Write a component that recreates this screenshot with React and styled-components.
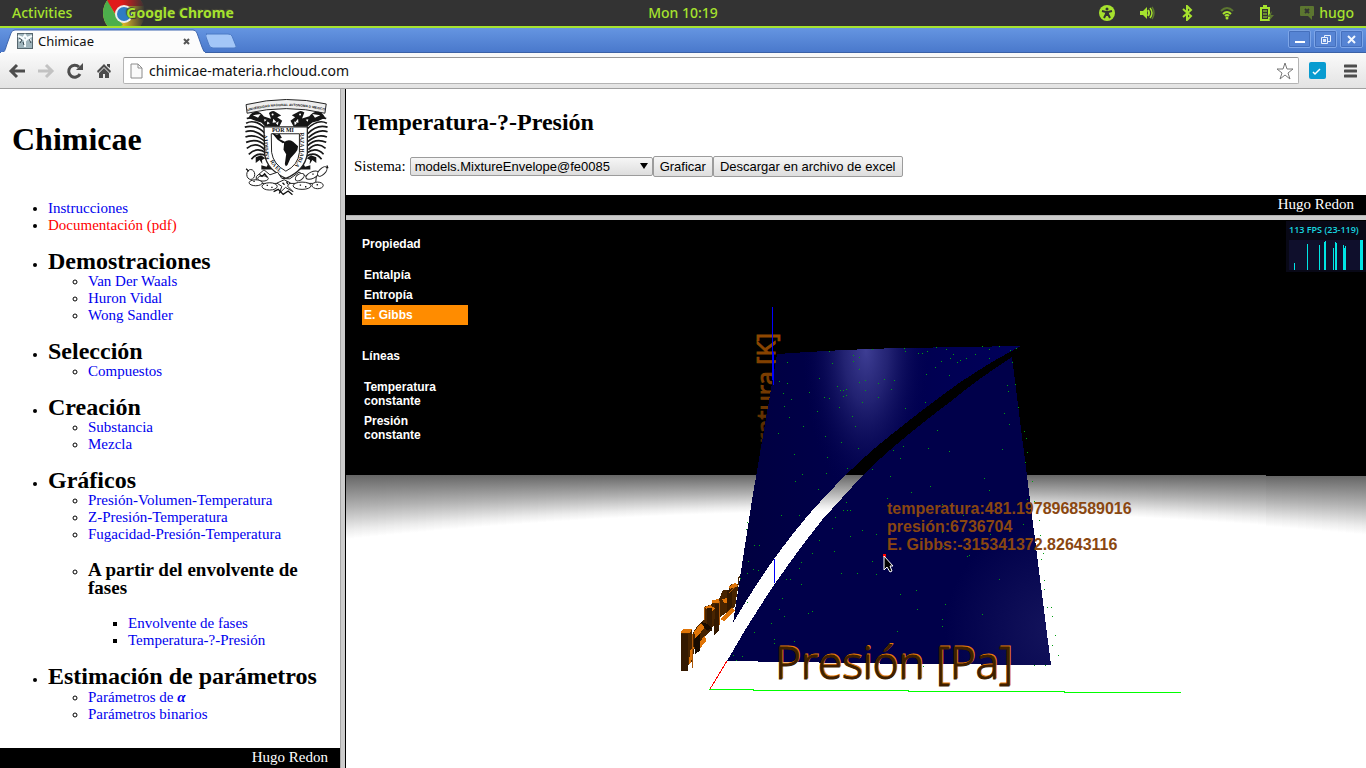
import React from "react";
import styled, { createGlobalStyle } from "styled-components";

const Global = createGlobalStyle`
  *, *::before, *::after { box-sizing: border-box; }
  body { margin: 0; background: #fff; }
  h1, h2, h3, p { margin: 0; }
  button { font: inherit; cursor: default; }
`;

const ui = `"Noto Sans", "Open Sans", sans-serif`;
const serif = `"Liberation Serif", "Times New Roman", serif`;
const sans = `"Liberation Sans", Arial, sans-serif`;

const Screen = styled.div`
  display: flex;
  flex-direction: column;
  min-height: 100vh;
`;

/* Desktop bar */

const DesktopBar = styled.header`
  display: grid;
  grid-template-columns: 1fr auto 1fr;
  align-items: center;
  height: 28px;
  padding: 0 12px;
  background: #333;
  border-bottom: 2px solid #a6e22e;
  color: #a6e22e;
  font: 500 14px/26px ${ui};
`;

const BarGroup = styled.div`
  display: flex;
  align-items: center;
  justify-content: ${(p) => (p.$end ? "flex-end" : "flex-start")};
  gap: ${(p) => p.$gap || 0}px;
  height: 26px;
`;

const BarButton = styled.button`
  display: flex;
  align-items: center;
  gap: 4px;
  height: 26px;
  padding: 0;
  border: 0;
  background: none;
  color: inherit;
`;

const AppButton = styled(BarButton)`
  gap: 0;
  font-weight: 700;
  text-shadow: 1px 1px 1px #333, -1px -1px 1px #4a4a3a;

  span { margin-left: -19px; }
`;

/* Browser frame */

const TabStrip = styled.div`
  display: flex;
  align-items: flex-end;
  height: 25px;
  background: linear-gradient(#6595e1, #4a79cc);
  border-bottom: 1px solid #3b61a6;
`;

const Tab = styled.div`
  position: relative;
  display: flex;
  align-items: center;
  width: 206px;
  height: 24px;
  margin-bottom: -1px;
  padding: 0 15px 0 17px;
  color: #111;
  font: 13px/20px ${ui};

  > svg:first-child {
    position: absolute;
    left: 0;
    top: 0;
  }
`;

const TabTitle = styled.span`
  position: relative;
  flex: 1;
  margin-left: 5px;
`;

const PlainIcon = styled.button`
  position: relative;
  display: flex;
  padding: 0;
  border: 0;
  background: none;
`;

const WindowControls = styled.div`
  display: flex;
  align-self: flex-start;
  gap: 3px;
  margin: 2px 3px 0 auto;
`;

const WindowButton = styled.button`
  display: grid;
  place-items: center;
  width: 23px;
  height: 18px;
  padding: 0;
  border: 1px solid #7ea6e8;
  outline: 1px solid #4570bd;
  outline-offset: -2px;
  border-radius: 2px;
  background: #5684d4;
`;

const Toolbar = styled.div`
  display: flex;
  align-items: center;
  height: 36px;
  padding: 0 9px 0 8px;
  background: linear-gradient(#fafafa, #e3e3e3);
  border-bottom: 1px solid #a0a0a0;
`;

const NavIcons = styled.div`
  display: flex;
  gap: 11px;
  margin-right: 10px;
`;

const AddressBar = styled.label`
  display: flex;
  flex: 1;
  align-items: center;
  height: 27px;
  padding: 0 4px 0 6px;
  border: 1px solid #b4b4b4;
  border-top-color: #979797;
  border-radius: 2px;
  background: #fff;
`;

const Address = styled.input`
  flex: 1;
  min-width: 0;
  height: 22px;
  margin-left: 6px;
  padding: 0;
  border: 0;
  outline: 0;
  background: none;
  color: #111;
  font: 14px/22px ${ui};
`;

const Extras = styled.div`
  display: flex;
  align-items: center;
  gap: 18px;
  margin-left: 10px;
`;

/* Page */

const Page = styled.div`
  display: flex;
  flex: 1;
`;

const Sidebar = styled.nav`
  display: flex;
  flex-direction: column;
  width: 340px;
  font: 15px/17px ${serif};
`;

const Brand = styled.div`
  display: flex;
  justify-content: space-between;
  padding: 9px 11px 0 12px;

  h1 {
    margin-top: 23px;
    font-size: 32px;
    line-height: 36px;
  }
`;

const Tree = styled.ul`
  margin: 0;
  padding: 0 0 0 40px;
  list-style-type: ${(p) => p.$mark};
`;

const RootTree = styled(Tree)`
  margin: 4px 8px 20px;
`;

const Heading = styled.h2`
  margin-top: 15px;
  font-size: 24px;
  line-height: 24px;
`;

const SubHeading = styled.h3`
  margin: 18px 0;
  font-size: 19px;
  line-height: 18px;
`;

const Link = styled.a`
  color: ${(p) => (p.$active ? "#f00" : "#00e")};
  text-decoration: none;
`;

const Alpha = styled.i`
  font-weight: 700;
  line-height: 18px;
`;

const Footer = styled.footer`
  height: 20px;
  margin-top: auto;
  padding-right: 12px;
  background: #000;
  color: #fff;
  font: 15px/18px ${serif};
  text-align: right;
`;

const Splitter = styled.div`
  background: #ccc;
  ${(p) =>
    p.$vertical
      ? "width: 6px; border-left: 1px solid #a6a6a6; border-right: 1px solid #000;"
      : "height: 5px; border-top: 1px solid #b0b0b0;"}
`;

const Content = styled.main`
  display: flex;
  flex: 1;
  flex-direction: column;
  min-width: 0;
`;

const Intro = styled.section`
  height: 106px;
  padding: 20px 8px 0;

  h2 {
    font: 700 24px/27px ${serif};
  }
`;

const SystemForm = styled.form`
  display: flex;
  align-items: center;
  margin-top: 20px;
  font: 15px/21px ${serif};
`;

const Picker = styled.span`
  position: relative;
  display: flex;
  width: 243px;
  margin-left: 4px;

  &::after {
    content: "";
    position: absolute;
    right: 5px;
    top: 6px;
    border: 4px solid transparent;
    border-top: 6px solid #000;
    border-bottom: 0;
    pointer-events: none;
  }
`;

const Select = styled.select`
  width: 100%;
  height: 19px;
  padding: 0 4px;
  appearance: none;
  border: 1px solid #9c9c9c;
  border-radius: 2px;
  background: linear-gradient(#f6f6f6, #dedede);
  color: #000;
  font: 13px/17px ${sans};
`;

const FormButton = styled.button`
  height: 21px;
  padding: 0 6px;
  border: 1px solid #9c9c9c;
  border-radius: 2px;
  background: linear-gradient(#f6f6f6, #dedede);
  color: #000;
  font: 13px/19px ${sans};
`;

const Viewer = styled.section`
  position: relative;
  display: flex;
  flex: 1;
  justify-content: space-between;
  align-items: flex-start;
  min-height: 548px;
  overflow: hidden;
`;

const SceneSvg = styled.svg`
  position: absolute;
  inset: 0;
  width: 100%;
  height: 100%;
`;

const Options = styled.div`
  position: relative;
  width: 122px;
  padding: 17px 0 0 16px;
  color: #fff;
  font: 700 12px/14px ${sans};
`;

const OptionTitle = styled.p`
  margin-bottom: 14px;
`;

const OptionGroup = styled.div`
  display: flex;
  flex-direction: column;
  margin-bottom: 24px;
`;

const Option = styled.button`
  padding: 3px 2px;
  border: 0;
  background: ${(p) => (p.$selected ? "#ff8c00" : "transparent")};
  color: inherit;
  text-align: left;
`;

const Meter = styled.div`
  position: relative;
  width: 80px;
  height: 51px;
  margin-top: 1px;
  padding: 0 3px 2px;
  background: #080816;
  color: #18d8e0;
  font: 600 9px/18px "Open Sans", sans-serif;
  white-space: nowrap;

  svg { display: block; margin-top: 1px; background: #0f0f2c; }
`;

const TabShape = () => (
  <svg width="206" height="24" aria-hidden="true">
    <path d="M0 24C5 24 5 21 7 15L11 4Q12 1 15 1H193Q196 1 197 4L202 18Q204 24 206 24Z" fill="#fcfcfc" stroke="#3f66ae" />
    <path d="M1 24H205" stroke="#fcfcfc" strokeWidth="2" />
  </svg>
);

const ChromeLogo = () => (
  <svg width="42" height="26" viewBox="0 0 42 26" aria-hidden="true">
    <defs>
      <linearGradient id="fade"><stop offset=".45" stopColor="#333" stopOpacity="0" /><stop offset="1" stopColor="#333" /></linearGradient>
      <clipPath id="disc"><circle cx="21" cy="13" r="21" /></clipPath>
    </defs>
    <g clipPath="url(#disc)">
      <path d="M0 0H42V26H0Z" fill="#e8bd28" />
      <path d="M3 0H42V6H21L13 15Z" fill="#e01b1b" />
      <path d="M4 0L13 16L20 25L18 26H0V0Z" fill="#4cae4c" />
    </g>
    <rect width="42" height="26" fill="url(#fade)" />
    <circle cx="21" cy="14" r="9" fill="#eee" />
    <circle cx="21" cy="14" r="7" fill="#2f7cc4" />
  </svg>
);

const Crest = () => (
  <svg width="85" height="98" viewBox="44 20 256 296" role="img" aria-label="Universidad Nacional Autónoma de México">
    <defs>
      <path id="ribbon" d="M54 60Q172 28 294 60" />
      <path id="left-edge" d="M119 206L113 125" />
      <path id="right-edge" d="M214 124V185Q210 220 174 246" />
      <path id="low-edge" d="M122 210Q135 238 170 256" />
    </defs>
    <path d="M50 40Q172 10 292 38L288 66Q172 38 53 66Z" fill="#eee" stroke="#222" strokeWidth="3" />
    <text fontFamily="Liberation Sans" fontWeight="700" fontSize="10" fill="#111"><textPath href="#ribbon">UNIVERSIDAD NACIONAL AVTONOMA D MEXICO</textPath></text>
    <g fill="none" stroke="#171717" strokeWidth="5">
      <path d="M52 82Q80 74 112 102M50 96Q78 82 110 114M46 108Q80 98 108 128M48 122Q76 112 106 140M48 138Q78 126 108 152M50 154Q84 140 108 164M52 172Q80 150 106 176M58 190Q83 166 110 186M66 205Q86 180 112 196" />
      <path d="M292 82Q264 74 232 102M294 96Q266 82 234 114M296 108Q264 98 236 128M296 122Q268 112 238 140M294 138Q266 126 236 152M292 154Q260 140 236 164M290 172Q264 150 238 176M284 190Q261 166 234 186M278 205Q258 180 232 196" />
    </g>
    <g fill="#161616">
      <path d="M57 80C70 52 94 60 104 76L125 83L119 65Q130 55 139 62L156 73L144 78L159 89L150 107H108L96 94Q75 89 57 80Z" />
      <path d="M289 80C276 52 251 61 241 75L219 82L226 64Q215 54 204 64L188 72L198 78L184 89L194 107H235L250 94Q272 90 289 80Z" />
      <path d="M79 199L95 193L108 202L98 207L99 220L91 207L79 216Z" />
      <path d="M262 199L246 193L233 202L243 207L242 220L250 207L262 216Z" />
      <path d="M96 223L112 228L116 220L132 236H96ZM244 223L228 228L224 220L208 236H244Z" />
    </g>
    <g fill="#fff">
      <circle cx="130" cy="70" r="3" /><circle cx="213" cy="70" r="3" />
      <path d="M114 91L122 96L113 100ZM132 83L142 93L130 95ZM207 83L198 93L208 95ZM70 72L94 68L86 80ZM274 72L250 68L258 80ZM140 96L148 90L146 102ZM203 96L195 90L197 102ZM104 84L112 86L106 92ZM238 84L230 86L236 92Z" />
    </g>
    <path d="M104 107H235V188Q228 238 170 263Q112 236 106 190Z" fill="#fff" stroke="#222" strokeWidth="4" />
    <path d="M126 128H211V184Q207 223 170 241Q132 220 127 184Z" fill="#fff" stroke="#222" strokeWidth="3" />
    <g fontFamily="Liberation Serif" fontWeight="700" fontSize="18" fill="#111">
      <text x="128" y="122">POR MI</text>
      <text fontSize="16"><textPath href="#left-edge">ESPIRITV</textPath></text>
      <text fontSize="16"><textPath href="#right-edge">RAZA HABLA</textPath></text>
      <text fontSize="16"><textPath href="#low-edge">RA EL</textPath></text>
    </g>
    <path d="M128 126L143 131L151 128L158 140L150 144L163 150L169 154L161 157L145 146Z" fill="#111" />
    <path d="M165 153Q178 143 192 152L207 166Q207 178 199 185L184 202L175 222L170 226L167 219L171 190L163 176Z" fill="#111" />
    <g fill="#fff" stroke="#222" strokeWidth="3">
      <path d="M81 257L104 237L122 252L145 244L158 263L182 264L210 244L230 256L263 247L260 278L80 278Z" />
      <ellipse cx="64" cy="251" rx="12" ry="15" /><ellipse cx="79" cy="276" rx="20" ry="9" />
      <ellipse cx="121" cy="287" rx="23" ry="11" /><ellipse cx="101" cy="263" rx="16" ry="8" />
      <ellipse cx="212" cy="259" rx="15" ry="9" transform="rotate(-35 212 259)" />
      <ellipse cx="250" cy="253" rx="21" ry="10" transform="rotate(-25 250 253)" />
      <ellipse cx="280" cy="242" rx="18" ry="9" transform="rotate(-45 280 242)" />
      <ellipse cx="219" cy="285" rx="27" ry="11" /><ellipse cx="266" cy="284" rx="17" ry="10" />
      <path d="M143 277L165 267L183 276L175 286L192 303L169 290L150 308L158 287Z" />
    </g>
    <path d="M50 234L58 241M294 224L297 232M72 272H76M112 284H116M126 290H130M212 283H216M228 288H232M250 250H254M263 282H267M90 250L98 257L106 249L114 260M133 303L147 296L162 311L177 301L190 312M160 276L166 282M172 272L176 280" fill="none" stroke="#111" strokeWidth="4" />
  </svg>
);

const stripes = Array.from({ length: 128 }, (_, i) => {
  const x = 346 + i * 8;
  return { x, depth: 36 + 0.000098 * (x - 880) ** 2 };
});

const specks = [
  [787,362],[829,351],[872,349],[904,348],[905,351],[936,347],[946,349],[918,353],[922,353],[927,351],[982,346],[989,349],[999,346],[1010,350],[1016,348],[953,354],[950,358],[941,361],[957,362],[960,360],[966,358],[975,354],[989,358],[935,367],[853,355],[853,361],[859,357],[832,363],[859,369],[926,374],[949,375],[819,378],[787,383],[779,381],[859,382],[865,380],[878,383],[884,379],[894,380],[837,386],[840,390],[843,390],[846,389],[865,390],[891,389],[824,397],[829,398],[843,396],[846,395],[862,402],[878,397],[905,408],[925,402],[783,393],[791,399],[809,392],[784,406],[839,407],[817,411],[852,416],[855,426],[789,417],[803,426],[778,433],[825,436],[841,442],[858,448],[827,457],[794,454],[847,468],[826,473],[802,474],[795,481],[818,489],[846,502],[781,515],[799,515],[872,469],[893,450],[903,446],[900,458],[928,448],[937,430],[949,451],[984,478],[989,490],[930,486],[890,476],[911,492],[887,498],[942,504],[1004,413],[1009,424],[1002,449],[1007,385],[1008,391],[1012,362],[1015,384],[1018,407],[1024,431],[1026,438],[1027,452],[1025,462],[1032,481],[1027,499],[843,510],[847,510],[850,510],[835,517],[832,528],[819,540],[834,551],[850,536],[862,530],[872,561],[876,534],[876,574],[841,573],[857,573],[812,553],[799,568],[801,562],[786,579],[790,579],[801,584],[748,561],[754,545],[759,545],[753,569],[747,573],[758,570],[740,578],[916,590],[900,594],[917,609],[945,604],[982,614],[999,579],[942,619],[942,626],[897,631],[808,613],[812,611],[779,609],[784,616],[771,623],[782,598],[754,632],[774,639],[774,643],[794,641],[742,656],[733,655],[736,660],[1034,501],[1039,520],[1040,535],[1041,559],[1043,553],[1044,580],[1044,589],[1047,607],[1051,607],[1052,616],[1055,635],[1052,645],[1058,655],[1045,665],[1034,665],[747,522],[746,529],[747,602],[923,666],[942,532],[963,515],[943,546],[967,556],[969,555],[990,534],[1023,524]
];

const Scene = () => (
  <SceneSvg viewBox="346 220 1020 548" preserveAspectRatio="xMidYMid slice" role="img" aria-label="Gráfica Temperatura-?-Presión">
    <defs>
      <linearGradient id="floor" x2="0" y2="1">
        <stop offset="0" stopColor="#666" /><stop offset=".5" stopColor="#b2b2b2" /><stop offset=".85" stopColor="#ececec" /><stop offset="1" stopColor="#fff" />
      </linearGradient>
      <radialGradient id="shine" gradientUnits="userSpaceOnUse" cx="0" cy="0" r="1" gradientTransform="translate(866 350) scale(64 150)">
        <stop offset="0" stopColor="#3e3e94" /><stop offset=".35" stopColor="#2b2b7c" stopOpacity=".8" /><stop offset="1" stopColor="#00004e" stopOpacity="0" />
      </radialGradient>
      <linearGradient id="sheet"><stop offset="0" stopColor="#000040" /><stop offset="1" stopColor="#00005a" /></linearGradient>
      <radialGradient id="corner" gradientUnits="userSpaceOnUse" cx="1055" cy="630" r="110">
        <stop offset="0" stopColor="#14145c" /><stop offset="1" stopColor="#00004a" />
      </radialGradient>
      <linearGradient id="axis" gradientUnits="userSpaceOnUse" x1="0" y1="0" x2="130" y2="0">
        <stop offset="0" stopColor="#2c1600" /><stop offset=".4" stopColor="#6a3500" /><stop offset="1" stopColor="#904800" />
      </linearGradient>
    </defs>
    <path d="M346 220H1366V768H346Z" fill="#fff" />
    <path d="M346 220H1366V476H1266V475H346Z" fill="#000" />
    <g fill="url(#floor)" shapeRendering="crispEdges">
      {stripes.map((s) => <rect key={s.x} x={s.x} y={s.x >= 1266 ? 476 : 475} width="8" height={s.depth} />)}
    </g>
    <g transform="translate(775 464) rotate(-90)" fontFamily="Open Sans" fontSize="25" textAnchor="end" fill="url(#axis)">
      <text x="131" y="0" stroke="url(#axis)">Temperatura [K]</text>
    </g>
    <path d="M772 307V312L773 385" fill="none" stroke="#00f" shapeRendering="crispEdges" />
    <g shapeRendering="crispEdges">
      <path d="M777 354Q850 349 904 348L1021 346Q975 370 940 397Q905 423 875 448Q840 478 805 519Q765 567 733 623L752 500Z" fill="url(#sheet)" />
      <path d="M777 354Q850 349 904 348L1021 346Q975 370 940 397Q905 423 875 448Q840 478 805 519Q765 567 733 623L752 500Z" fill="url(#shine)" />
      <path d="M1012 357Q975 381 950 402Q895 443 862 476L822 520Q768 588 727 661L910 664L1051 665L1030 500Z" fill="url(#corner)" />
      <path d="M773 352V385M774 559V583" stroke="#00f" />
      <path d="M727 661L710 689" stroke="#f00" />
      <path d="M709 689.500H753V690.500H908V691.500H1064V692.500H1181" fill="none" stroke="#0f0" />
      {specks.map(([x, y]) => <rect key={`${x}-${y}`} x={x} y={y} width="1" height="1" fill="#00a010" />)}
    </g>
    <g shapeRendering="crispEdges">
      <path d="M729 590L731 584H738V577L740 575L735 607L723 615L716 621L710 632L695 646L692 662L681 671V631L685 629H692V635L697 626L704 620V607L712 604V600L719 599L723 590Z" fill="#482400" />
      <path d="M681 631L684 629H692L690 633H681ZM694 632L700 624L706 626L701 632L696 640ZM704 607L710 605L715 608L711 612ZM712 600L719 599V603H712ZM722 599L728 598L731 602L724 603ZM728 587L735 583L738 586L730 589ZM699 643L705 635L706 641L699 650ZM720 619L732 608L735 611L724 621ZM690 650L694 646L691 663L689 664Z" fill="#df7407" />
      <path d="M681 634H688V671H681ZM707 608H712V631H707ZM715 604H719V630L714 635ZM727 590H732V606L727 612Z" fill="#341900" />
      <path d="M701 622L708 624L712 629L706 630ZM694 640L700 633V651L695 654Z" fill="#180b00" />
      <path d="M692 634V668M704 607V620M719 601V625M729 593L735 587" fill="none" stroke="#a95608" />
    </g>
    <g fontFamily="Open Sans" fontWeight="300" fontSize="44">
      <text x="776" y="678" fill="#e67905" stroke="#e67905">Presión [Pa]</text>
      <text x="775" y="679" fill="#3f1f00" stroke="#3f1f00">Presión [Pa]</text>
    </g>
    <g fontFamily="Liberation Sans" fontWeight="700" fontSize="16" fill="#8a4710">
      <text x="887" y="514">temperatura:481.1978968589016</text>
      <text x="887" y="532">presión:6736704</text>
      <text x="887" y="550">E. Gibbs:-315341372.82643116</text>
    </g>
    <path d="M883 554H886V557H883Z" fill="#f00" />
    <path d="M884 556V570L887 567L890 572L892 571L890 566H893Z" fill="#000" stroke="#fff" />
  </SceneSvg>
);

const groups = [
  { title: "Demostraciones", items: ["Van Der Waals", "Huron Vidal", "Wong Sandler"] },
  { title: "Selección", items: ["Compuestos"] },
  { title: "Creación", items: ["Substancia", "Mezcla"] },
  {
    title: "Gráficos",
    items: ["Presión-Volumen-Temperatura", "Z-Presión-Temperatura", "Fugacidad-Presión-Temperatura"],
    nested: { title: "A partir del envolvente de fases", items: ["Envolvente de fases", "Temperatura-?-Presión"] },
  },
  { title: "Estimación de parámetros", items: [<>Parámetros de <Alpha>α</Alpha></>, "Parámetros binarios"] },
];

const LinkItems = ({ items }) => items.map((item, i) => <li key={i}><Link href="#">{item}</Link></li>);

const fpsBars = [[5,23,1],[18,4,1],[30,5,1],[35,2,1],[36,1,1],[44,8,1],[46,2,1],[47,3,1],[54,5,1],[55,8,1],[56,6,1],[71,0,3]];

export default function App() {
  return (
    <Screen>
      <Global />
      <DesktopBar>
        <BarGroup $gap={31}>
          <BarButton>Activities</BarButton>
          <AppButton><ChromeLogo /><span>Google Chrome</span></AppButton>
        </BarGroup>
        <BarButton>Mon 10:19</BarButton>
        <BarGroup $end $gap={24}>
          <svg width="16" height="16" viewBox="0 0 16 16" aria-label="Accessibility"><circle cx="8" cy="8" r="8" fill="#a6e22e" /><circle cx="8" cy="4" r="1.500" fill="#333" /><path d="M3 6L7 7V9L5 13M13 6L9 7V9L11 13M7 7H9V10H7Z" fill="none" stroke="#333" strokeWidth="2" /></svg>
          <svg width="16" height="16" viewBox="0 0 16 16" aria-label="Volume"><path d="M1 6H4L8 2V14L4 10H1Z" fill="#a6e22e" /><path d="M9 5Q11 8 9 11" fill="none" stroke="#a6e22e" strokeWidth="2" /><path d="M11 3Q15 8 11 13" fill="none" stroke="#a6e22e" strokeWidth="1.500" /><path d="M13 2Q17 8 13 14" fill="none" stroke="#5c7630" strokeWidth="1.500" /></svg>
          <svg width="16" height="16" viewBox="0 0 16 16" aria-label="Bluetooth"><path d="M4 4L12 11L8 15V1L12 5L4 12" fill="none" stroke="#a6e22e" strokeWidth="2" /></svg>
          <svg width="16" height="16" viewBox="0 0 16 16" aria-label="Wi-Fi"><path d="M2 6Q8 0 14 6" fill="none" stroke="#5c7630" strokeWidth="2" /><path d="M4 9Q8 5 12 9" fill="none" stroke="#a6e22e" strokeWidth="2" /><path d="M6 11Q8 9 10 11" fill="none" stroke="#a6e22e" strokeWidth="2" /><circle cx="8" cy="13" r="1.500" fill="#a6e22e" /></svg>
          <svg width="16" height="16" viewBox="0 0 16 16" aria-label="Battery"><path d="M2 3H10V15H2ZM4 1H8" fill="none" stroke="#a6e22e" strokeWidth="2" /><path d="M4 6H8M4 9H8M4 12H8" stroke="#a6e22e" strokeWidth="1" /><path d="M13 6L8 12H11L10 16L15 10H12Z" fill="#5c7630" /></svg>
          <BarButton><svg width="16" height="16" viewBox="0 0 16 16" aria-hidden="true"><path d="M2 1H14Q15 1 15 2V10Q15 11 14 11H13V15L9 11H2Q1 11 1 10V2Q1 1 2 1Z" fill="#5c7630" /><path d="M6 4L10 8M10 4L6 8" stroke="#333" strokeWidth="2" /></svg>hugo</BarButton>
        </BarGroup>
      </DesktopBar>

      <TabStrip>
        <Tab>
          <TabShape />
          <PlainIcon as="span">
            <svg width="16" height="16" viewBox="0 0 16 16" aria-hidden="true"><rect x="0" y="0" width="16" height="16" fill="#9fb4bc" /><path d="M0 0H16V16H0Z" fill="none" stroke="#56666e" strokeWidth="2" /><path d="M1 3L6 5L8 2L10 5L15 3M2 8L6 5L8 8L11 5L14 8M8 7V14" fill="none" stroke="#f6fbfd" strokeWidth="2" /><path d="M2 5L5 7L3 10M12 6L14 10M6 9L7 12" stroke="#35454d" fill="none" /></svg>
          </PlainIcon>
          <TabTitle>Chimicae</TabTitle>
          <PlainIcon aria-label="Close tab"><svg width="9" height="9"><path d="M2 2L7 7M7 2L2 7" stroke="#555" strokeWidth="2" /></svg></PlainIcon>
        </Tab>
        <PlainIcon aria-label="New tab"><svg width="33" height="19" viewBox="3 0 33 19"><path d="M2 1H25Q28 1 29 3L33 13Q34 15 31 15H10Q7 15 6 12L3 4Q2 1 4 1Z" fill="#a3c6f7" stroke="#4d7bc6" /></svg></PlainIcon>
        <WindowControls>
          <WindowButton aria-label="Minimize"><svg width="11" height="11"><path d="M1 8H11" stroke="#fff" strokeWidth="2" /></svg></WindowButton>
          <WindowButton aria-label="Restore"><svg width="11" height="11"><path d="M4.500 1.500H10.500V7.500H8M4.500 1.500V3M1.500 3.500H7.500V9.500H1.500Z" fill="none" stroke="#e8f0fd" /><rect x="3" y="5" width="3" height="3" fill="#dce8fb" /></svg></WindowButton>
          <WindowButton aria-label="Close"><svg width="11" height="11"><path d="M2 2L9 9M9 2L2 9" stroke="#f2f7ff" strokeWidth="2" /></svg></WindowButton>
        </WindowControls>
      </TabStrip>

      <Toolbar>
        <NavIcons>
          <PlainIcon aria-label="Back"><svg width="18" height="18" viewBox="0 0 18 18"><path d="M17 9H4M9 3L3 9L9 15" fill="none" stroke="#4d4d4d" strokeWidth="3" /></svg></PlainIcon>
          <PlainIcon aria-label="Forward"><svg width="18" height="18" viewBox="0 0 18 18"><path d="M1 9H14M9 3L15 9L9 15" fill="none" stroke="#c2c2c2" strokeWidth="3" /></svg></PlainIcon>
          <PlainIcon aria-label="Reload"><svg width="18" height="18" viewBox="0 0 18 18"><path d="M14 12A6 6 0 1 1 13 5" fill="none" stroke="#4d4d4d" strokeWidth="3" /><path d="M10 8H17V1Z" fill="#4d4d4d" /></svg></PlainIcon>
          <PlainIcon aria-label="Home"><svg width="18" height="18" viewBox="0 0 18 18"><path d="M9 2L16 9L15 11L9 5L3 11L2 9ZM12 2H15V6L12 4ZM9 6L14 11V16H10V12H8V16H4V11Z" fill="#4d4d4d" /></svg></PlainIcon>
        </NavIcons>
        <AddressBar>
          <svg width="13" height="16" viewBox="0 0 13 16" aria-hidden="true"><path d="M1 1H8L12 5V15H1ZM8 1V5H12" fill="#fafafa" stroke="#8c8c8c" /></svg>
          <Address aria-label="Address" defaultValue="chimicae-materia.rhcloud.com" />
          <PlainIcon type="button" aria-label="Bookmark"><svg width="18" height="18" viewBox="0 0 18 18"><path d="M9 1L11 7H17L12 11L14 17L9 13L4 17L6 11L1 7H7Z" fill="#fff" stroke="#777" /></svg></PlainIcon>
        </AddressBar>
        <Extras>
          <PlainIcon aria-label="Extension"><svg width="17" height="17"><rect width="17" height="17" rx="2" fill="#089bd0" /><path d="M4 10L6 12L11 7" fill="none" stroke="#fff" strokeWidth="1.500" /></svg></PlainIcon>
          <PlainIcon aria-label="Menu"><svg width="13" height="14"><path d="M1 2H12M1 7H12M1 12H12" stroke="#4d4d4d" strokeWidth="3" strokeLinecap="round" /></svg></PlainIcon>
        </Extras>
      </Toolbar>

      <Page>
        <Sidebar>
          <Brand><h1>Chimicae</h1><Crest /></Brand>
          <RootTree $mark="disc">
            <li><Link href="#">Instrucciones</Link></li>
            <li><Link href="#" $active>Documentación (pdf)</Link></li>
            {groups.map((g) => (
              <li key={g.title}>
                <Heading>{g.title}</Heading>
                <Tree $mark="circle">
                  <LinkItems items={g.items} />
                  {g.nested && (
                    <li>
                      <SubHeading>{g.nested.title}</SubHeading>
                      <Tree $mark="square"><LinkItems items={g.nested.items} /></Tree>
                    </li>
                  )}
                </Tree>
              </li>
            ))}
          </RootTree>
          <Footer>Hugo Redon</Footer>
        </Sidebar>
        <Splitter $vertical />
        <Content>
          <Intro>
            <h2>Temperatura-?-Presión</h2>
            <SystemForm onSubmit={(e) => e.preventDefault()}>
              <label htmlFor="system">Sistema:</label>
              <Picker>
                <Select id="system"><option>models.MixtureEnvelope@fe0085</option></Select>
              </Picker>
              <FormButton type="submit">Graficar</FormButton>
              <FormButton type="button">Descargar en archivo de excel</FormButton>
            </SystemForm>
          </Intro>
          <Footer>Hugo Redon</Footer>
          <Splitter />
          <Viewer>
            <Scene />
            <Options>
              <OptionTitle>Propiedad</OptionTitle>
              <OptionGroup>
                <Option>Entalpía</Option>
                <Option>Entropía</Option>
                <Option $selected>E. Gibbs</Option>
              </OptionGroup>
              <OptionTitle>Líneas</OptionTitle>
              <OptionGroup>
                <Option>Temperatura constante</Option>
                <Option>Presión constante</Option>
              </OptionGroup>
            </Options>
            <Meter>
              113 FPS (23-119)
              <svg width="74" height="30" aria-hidden="true">
                {fpsBars.map(([x, y, w]) => <rect key={x} x={x} y={y} width={w} height={30 - y} fill="#00e5e5" />)}
              </svg>
            </Meter>
          </Viewer>
        </Content>
      </Page>
    </Screen>
  );
}
